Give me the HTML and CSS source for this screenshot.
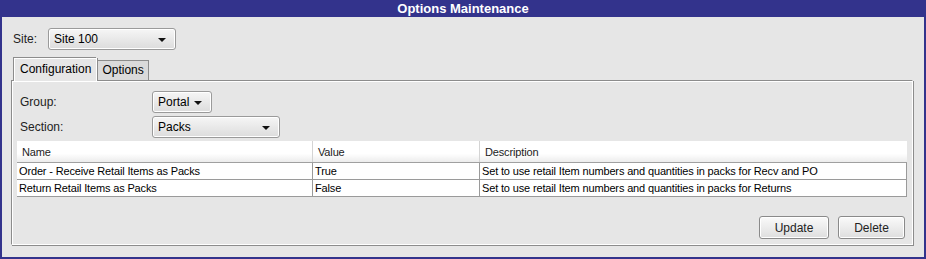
FILE: index.html
```html
<!DOCTYPE html>
<html lang="en">
<head>
    <meta charset="UTF-8">
    <title>Options Maintenance</title>
    <link rel="stylesheet" href="styles.css">
</head>
<body>
    <div class="window">
        <div class="title-bar">Options Maintenance</div>
        <div class="window-body">
            <div class="site-row">
                <span class="label site-label">Site:</span>
                <div class="combo combo-site">Site 100<span class="arrow"></span></div>
            </div>
            <div class="tabs">
                <div class="tab active">Configuration</div>
                <div class="tab">Options</div>
            </div>
            <div class="panel">
                <div class="form-row">
                    <span class="label field-label">Group:</span>
                    <div class="combo combo-group">Portal<span class="arrow"></span></div>
                </div>
                <div class="form-row">
                    <span class="label field-label">Section:</span>
                    <div class="combo combo-section">Packs<span class="arrow"></span></div>
                </div>
                <table class="grid">
                    <thead>
                        <tr>
                            <th class="col-name">Name</th>
                            <th class="col-value">Value</th>
                            <th class="col-desc">Description</th>
                        </tr>
                    </thead>
                    <tbody>
                        <tr>
                            <td>Order - Receive Retail Items as Packs</td>
                            <td>True</td>
                            <td>Set to use retail Item numbers and quantities in packs for Recv and PO</td>
                        </tr>
                        <tr>
                            <td>Return Retail Items as Packs</td>
                            <td>False</td>
                            <td>Set to use retail Item numbers and quantities in packs for Returns</td>
                        </tr>
                    </tbody>
                </table>
                <div class="actions">
                    <button class="btn">Update</button>
                    <button class="btn">Delete</button>
                </div>
            </div>
        </div>
    </div>
</body>
</html>
```

FILE: styles.css
```css
html, body {
    margin: 0;
    padding: 0;
}

body {
    font-family: "Liberation Sans", Arial, sans-serif;
    font-size: 12px;
    color: #000;
    background: #e6e6e6;
}

.window {
    width: 926px;
    height: 259px;
    box-sizing: border-box;
    border: 2px solid #33338c;
    border-top: none;
    background: #e6e6e6;
}

.title-bar {
    height: 17px;
    margin: 0 -2px;
    background: #33338c;
    color: #fff;
    font-weight: bold;
    font-size: 13px;
    line-height: 17px;
    text-align: center;
}

.window-body {
    padding: 11px 10px 0 9px;
}

.site-row {
    display: flex;
    align-items: center;
    height: 22px;
}

.label {
    font-size: 12px;
    color: #222;
}

.site-label {
    width: 35px;
    padding-left: 2px;
}

.combo {
    position: relative;
    box-sizing: border-box;
    height: 22px;
    line-height: 20px;
    padding-left: 5px;
    border: 1px solid #9a9a9a;
    border-radius: 3px;
    background: linear-gradient(#f6f6f6, #dcdcdc);
    box-shadow: inset 0 0 0 1px #fff;
    font-size: 12px;
}

.arrow {
    position: absolute;
    right: 9px;
    top: 9px;
    border-left: 4px solid transparent;
    border-right: 4px solid transparent;
    border-top: 4px solid #111;
}

.combo-site { width: 128px; }
.combo-group { width: 60px; }
.combo-section { width: 128px; }

.tabs {
    display: flex;
    align-items: flex-end;
    margin-top: 8px;
    padding-left: 3px;
    height: 22px;
}

.tab {
    box-sizing: border-box;
    height: 20px;
    line-height: 19px;
    padding: 0 4px;
    border: 1px solid #8c8c8c;
    border-bottom: none;
    background: #dadada;
    font-size: 12px;
}

.tab.active {
    height: 23px;
    margin-bottom: -1px;
    padding: 0 5px;
    background: #e6e6e6;
    border-right-color: #fff;
    border-left-color: #fff;
    border-top-color: #fff;
    box-shadow: -1px -1px 0 #8c8c8c, 1px 0 0 #8c8c8c;
    position: relative;
    z-index: 1;
    line-height: 21px;
}

.panel {
    height: 165px;
    box-sizing: border-box;
    border: 1px solid #8c8c8c;
    border-right-color: #fff;
    border-bottom-color: #fff;
    box-shadow: inset 1px 1px 0 #fff, 1px 1px 0 #8c8c8c;
    margin-right: 1px;
    padding: 10px 6px 0 5px;
}

.form-row {
    display: flex;
    align-items: center;
    margin-bottom: 3px;
}

.field-label {
    width: 132px;
    padding-left: 3px;
}

.grid {
    width: 890px;
    table-layout: fixed;
    margin-top: 3px;
    border-collapse: collapse;
    font-size: 11px;
    letter-spacing: -0.15px;
    background: #fff;
}

.grid th {
    height: 21px;
    text-align: left;
    font-weight: normal;
    padding: 0 5px;
    color: #222;
    background: linear-gradient(#fff 60%, #ececec);
    border-left: 1px solid #d4d4d4;
    border-bottom: 1px solid #a0a0a0;
}

.grid th:first-child {
    border-left: none;
}

.grid td {
    height: 16px;
    padding: 0 2px;
    border: 1px solid #9a9a9a;
    border-top: none;
    white-space: nowrap;
    overflow: hidden;
}

.grid td:first-child {
    border-left: none;
}

.col-name { width: 285px; }
.col-value { width: 156px; }

.actions {
    display: flex;
    justify-content: flex-end;
    gap: 9px;
    margin-top: 19px;
    padding-right: 1px;
}

.btn {
    box-sizing: border-box;
    height: 23px;
    padding: 0;
    border: 1px solid #8a8a8a;
    border-radius: 3px;
    background: linear-gradient(#fafafa, #dedede);
    box-shadow: inset 0 0 0 1px #fff;
    font-family: "Liberation Sans", Arial, sans-serif;
    font-size: 12px;
    color: #222;
}

.btn:first-child { width: 70px; }
.btn:last-child { width: 67px; }
```
